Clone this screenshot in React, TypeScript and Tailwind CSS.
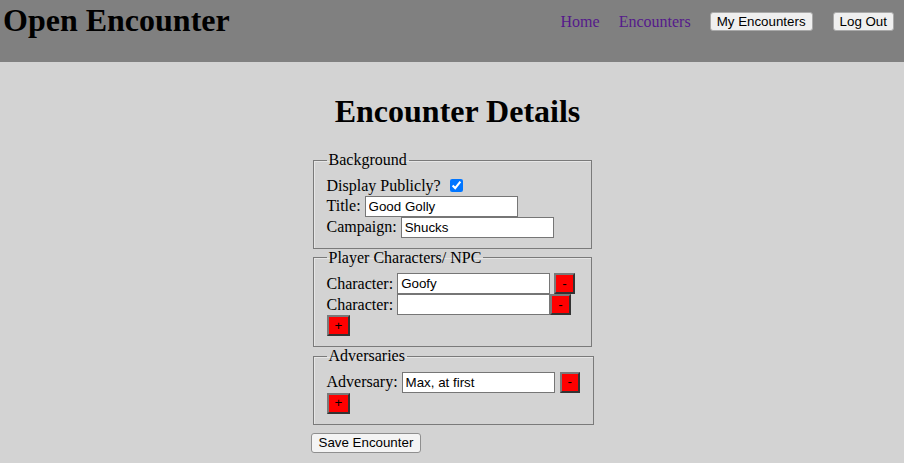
import { useState } from 'react';

const sans = "font-['Liberation_Sans',Arial,sans-serif] text-[13.33px]";

function TextInput({ value, onChange }: { value: string; onChange: (v: string) => void }) {
  return (
    <input
      type="text"
      value={value}
      onChange={(e) => onChange(e.target.value)}
      className={`${sans} w-[153px] h-[21px] ml-[4px] px-[3px] bg-white border border-[#767676] text-black outline-none`}
    />
  );
}

function RedButton({ label, onClick, className = '' }: { label: string; onClick?: () => void; className?: string }) {
  return (
    <button
      type="button"
      onClick={onClick}
      className={`${sans} h-[21px] px-[6px] leading-none bg-[#ff0000] text-black border-2 border-t-[#7a7a7a] border-l-[#7a7a7a] border-r-[#333] border-b-[#333] ${className}`}
    >
      {label}
    </button>
  );
}

function Fieldset({ legend, children }: { legend: string; children: React.ReactNode }) {
  return (
    <fieldset className="mx-[2px] px-[13px] pt-[6.5px] pb-[10px] border border-[#7a7a7a] shadow-[inset_1px_1px_0_#e6e6e6]">
      <legend className="px-[2px]">{legend}</legend>
      {children}
    </fieldset>
  );
}

export default function App() {
  const [title, setTitle] = useState('Good Golly');
  const [campaign, setCampaign] = useState('Shucks');
  const [characters, setCharacters] = useState(['Goofy', '']);
  const [adversaries, setAdversaries] = useState(['Max, at first']);

  return (
    <div className="min-h-screen bg-[#d3d3d3] text-black font-['Liberation_Serif','Times_New_Roman',serif] leading-[normal] text-base">
      <header className="h-[62px] bg-[#808080] flex justify-between items-start">
        <h1 className="text-[32px] font-bold pl-[3px] mt-[2px]">Open Encounter</h1>
        <nav className="flex items-center gap-[19px] mt-[12px] h-[19px] pr-[10px]">
          <a href="#" className="text-[#551a8b]">Home</a>
          <a href="#" className="text-[#551a8b]">Encounters</a>
          <button className={`${sans} h-[19px] px-[6px] bg-[#efefef] border border-[#a9a9a9] rounded-[3px]`}>My Encounters</button>
          <button className={`${sans} h-[19px] px-[6px] ml-[1px] bg-[#efefef] border border-[#a9a9a9] rounded-[3px]`}>Log Out</button>
        </nav>
      </header>

      <main>
        <h1 className="text-[32px] font-bold text-center mt-[31px] mb-[21px] pl-[11px]">Encounter Details</h1>

        <form className="w-[283px] mx-auto" onSubmit={(e) => e.preventDefault()}>
          <Fieldset legend="Background">
            <div className="flex items-center h-[20px]">
              <span>Display Publicly?</span>
              <input type="checkbox" defaultChecked className="ml-[9px] w-[13px] h-[13px] accent-[#0075ff]" />
            </div>
            <div className="flex items-center h-[21px]">
              <span>Title:</span>
              <TextInput value={title} onChange={setTitle} />
            </div>
            <div className="flex items-center h-[21px]">
              <span>Campaign:</span>
              <TextInput value={campaign} onChange={setCampaign} />
            </div>
          </Fieldset>

          <Fieldset legend="Player Characters/ NPC">
            {characters.map((c, i) => (
              <div key={i} className="flex items-center h-[21px]">
                <span>Character:</span>
                <TextInput
                  value={c}
                  onChange={(v) => setCharacters(characters.map((x, j) => (j === i ? v : x)))}
                />
                <RedButton
                  label="-"
                  className={i === 0 ? 'ml-[4px]' : ''}
                  onClick={() => setCharacters(characters.filter((_, j) => j !== i))}
                />
              </div>
            ))}
            <div className="flex items-center h-[21px]">
              <RedButton label="+" onClick={() => setCharacters([...characters, ''])} />
            </div>
          </Fieldset>

          <Fieldset legend="Adversaries">
            {adversaries.map((a, i) => (
              <div key={i} className="flex items-center h-[21px]">
                <span>Adversary:</span>
                <TextInput
                  value={a}
                  onChange={(v) => setAdversaries(adversaries.map((x, j) => (j === i ? v : x)))}
                />
                <RedButton
                  label="-"
                  className="ml-[5px]"
                  onClick={() => setAdversaries(adversaries.filter((_, j) => j !== i))}
                />
              </div>
            ))}
            <div className="flex items-center h-[21px]">
              <RedButton label="+" onClick={() => setAdversaries([...adversaries, ''])} />
            </div>
          </Fieldset>

          <button
            type="submit"
            className={`${sans} h-[20px] px-[7px] mt-[8px] bg-[#f4f4f4] border border-[#8f8f8f] rounded-[3px]`}
          >
            Save Encounter
          </button>
        </form>
      </main>
    </div>
  );
}
